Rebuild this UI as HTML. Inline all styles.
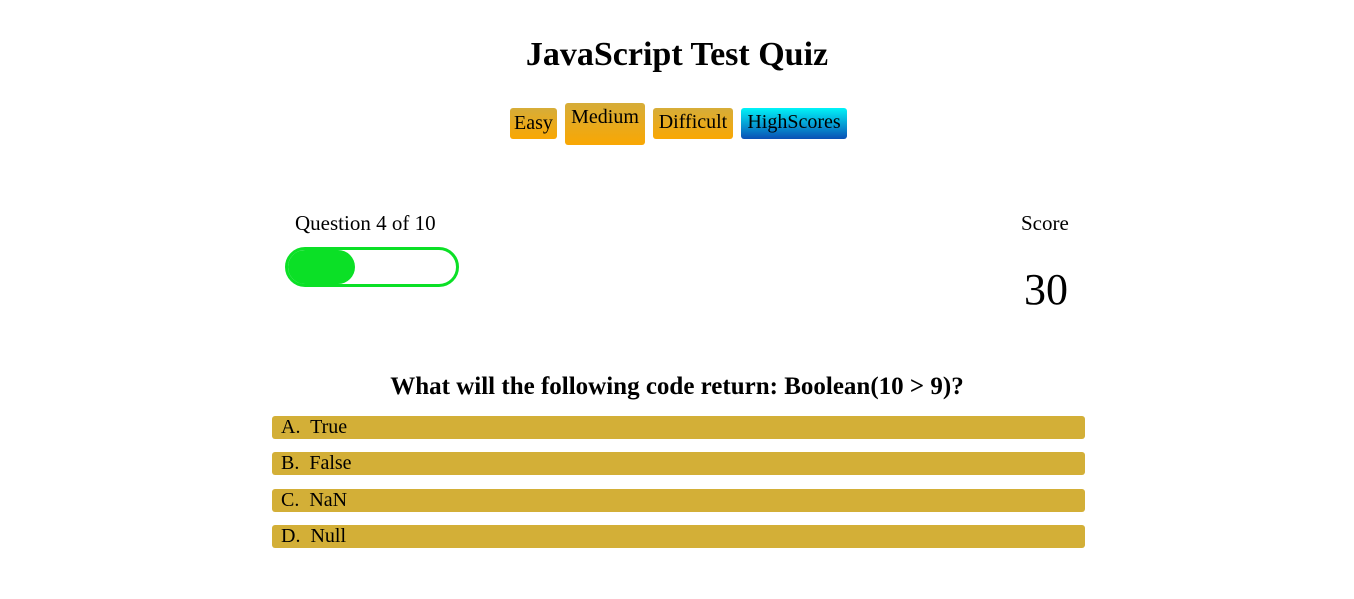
<!DOCTYPE html>
<html><head><style>
body{margin:0;width:1354px;height:599px;background:#fff;font-family:"Liberation Serif",serif;color:#000;position:relative;overflow:hidden}
.a{position:absolute}
h1{position:absolute;margin:0;left:0;width:1354px;text-align:center;top:36px;font-size:34px;font-weight:bold;letter-spacing:0}
.b{position:absolute;border-radius:3px;background:linear-gradient(#d6ad39,#f9a703);font-size:20px;text-align:center;box-sizing:border-box}
.ans{position:absolute;left:272px;width:813px;height:23px;background:#d3af37;border-radius:3px;font-size:20px;line-height:23px;padding-left:9px;box-sizing:border-box}
</style></head><body>
<h1>JavaScript Test Quiz</h1>
<div class="b" style="left:510px;top:108px;width:47px;height:31px;line-height:31px">Easy</div>
<div class="b" style="left:565px;top:103px;width:80px;height:42px;line-height:28px">Medium</div>
<div class="b" style="left:653px;top:108px;width:80px;height:31px;line-height:29px">Difficult</div>
<div class="b" style="left:741px;top:108px;width:106px;height:31px;line-height:29px;background:linear-gradient(#00f4f8,#0a50b5)">HighScores</div>
<div class="a" style="left:295px;top:211px;font-size:21px">Question 4 of 10</div>
<div class="a" style="left:285px;top:247px;width:174px;height:40px;border:3px solid #0be026;border-radius:20px;box-sizing:border-box"></div>
<div class="a" style="left:288px;top:250px;width:67px;height:34px;background:#0be026;border-radius:17px"></div>
<div class="a" style="left:1021px;top:211px;font-size:21px">Score</div>
<div class="a" style="left:1024px;top:264px;font-size:44px">30</div>
<div class="a" style="left:0;width:1354px;text-align:center;top:373px;font-size:25px;font-weight:bold">What will the following code return: Boolean(10 &gt; 9)?</div>
<div class="ans" style="top:416px">A.&nbsp; True</div>
<div class="ans" style="top:452px">B.&nbsp; False</div>
<div class="ans" style="top:489px">C.&nbsp; NaN</div>
<div class="ans" style="top:525px">D.&nbsp; Null</div>
</body></html>
